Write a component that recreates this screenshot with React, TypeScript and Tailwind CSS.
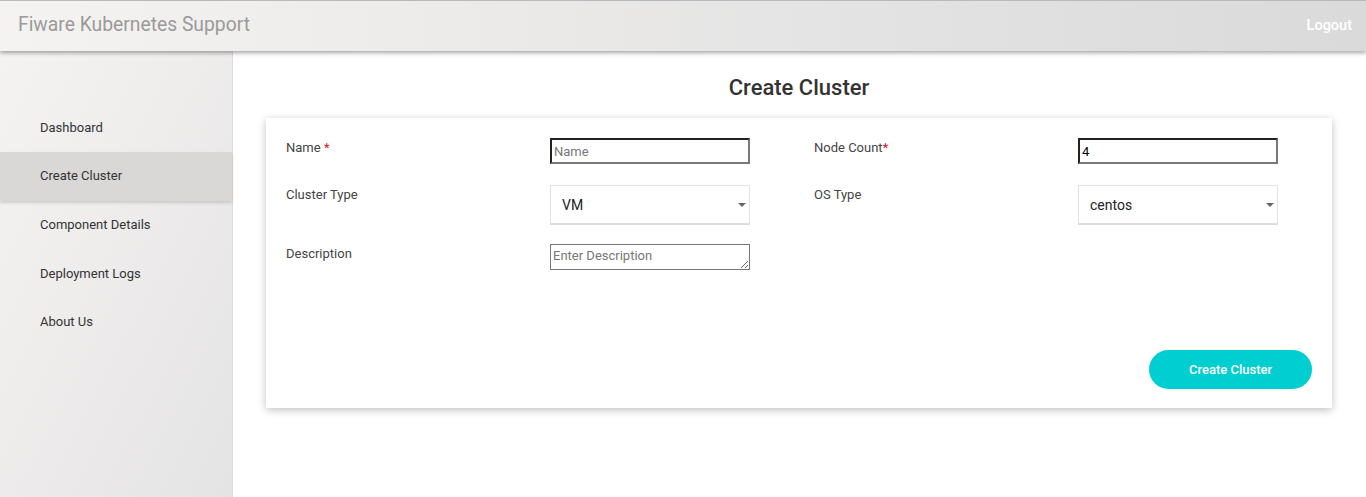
import React, { useState } from 'react';

const navItems = ['Dashboard', 'Create Cluster', 'Component Details', 'Deployment Logs', 'About Us'];

const SelectBox = ({ value, options }: { value: string; options: string[] }) => (
  <div className="relative w-[200px]">
    <select
      defaultValue={value}
      className="w-full h-[40px] appearance-none bg-white border border-[#e2e2e2] border-b-2 border-b-[#dcdcdc] pl-[11px] pt-[2px] text-[14px] text-[#222] outline-none"
    >
      {options.map((o) => (
        <option key={o}>{o}</option>
      ))}
    </select>
    <span className="pointer-events-none absolute right-[4px] top-[18px] w-0 h-0 border-l-[4px] border-r-[4px] border-t-[4px] border-l-transparent border-r-transparent border-t-[#666]" />
  </div>
);

export default function App() {
  const [active] = useState('Create Cluster');
  const [nodeCount, setNodeCount] = useState('4');

  return (
    <div className="w-full h-[497px] flex flex-col bg-white overflow-hidden font-['Roboto',sans-serif]">
      <header className="relative z-10 h-[51px] shrink-0 border-t border-[#b9b9b9] bg-gradient-to-r from-[#f5f3f2] to-[#dadada] shadow-[0_2px_4px_rgba(0,0,0,0.35)] flex items-center justify-between pl-[18px] pr-[14px]">
        <span className="text-[19.3px] text-[#9a9a9a] pb-[1px]">Fiware Kubernetes Support</span>
        <span className="text-[14.5px] font-medium text-white pb-[1px]">Logout</span>
      </header>
      <div className="flex flex-1">
        <aside className="w-[233px] shrink-0 border-r border-[#dcdcdc] bg-gradient-to-br from-[#f5f3f2] to-[#e5e4e4] pt-[52px]">
          {navItems.map((item) => (
            <div
              key={item}
              className={
                item === active
                  ? 'h-[49px] flex items-center pl-[40px] text-[13px] text-[#333] bg-[#dad8d7] shadow-[0_2px_3px_rgba(0,0,0,0.15)]'
                  : 'h-[48.5px] flex items-center pl-[40px] text-[13px] text-[#333]'
              }
            >
              {item}
            </div>
          ))}
        </aside>
        <main className="flex-1 pl-[33px] pr-[34px]">
          <h1 className="text-center text-[22px] font-medium text-[#333] mt-[23px] mb-[16px] leading-[28px]">Create Cluster</h1>
          <div className="bg-white shadow-[0_2px_8px_rgba(0,0,0,0.25)] h-[290px] pl-[20px] pr-[20px] pt-[20px] flex flex-col">
            <div className="grid grid-cols-[264px_264px_264px_200px] gap-y-[21px] text-[13px] text-[#444]">
              <div>
                Name <span className="text-[#e0112b]">*</span>
              </div>
              <input
                placeholder="Name"
                className="w-[200px] h-[26px] border-2 border-t-[#222] border-l-[#222] border-r-[#777] border-b-[#777] px-[2px] text-[13px] outline-none placeholder:text-[#777]"
              />
              <div>
                Node Count<span className="text-[#e0112b]">*</span>
              </div>
              <input
                value={nodeCount}
                onChange={(e) => setNodeCount(e.target.value)}
                className="w-[200px] h-[26px] border-2 border-t-[#222] border-l-[#222] border-r-[#777] border-b-[#777] px-[2px] text-[13px] text-black outline-none"
              />

              <div>Cluster Type</div>
              <SelectBox value="VM" options={['VM', 'Baremetal']} />
              <div>OS Type</div>
              <SelectBox value="centos" options={['centos', 'ubuntu']} />

              <div className="-mt-[2px]">Description</div>
              <textarea
                placeholder="Enter Description"
                className="w-[200px] h-[26px] border border-[#767676] px-[2px] text-[13px] leading-[22px] outline-none placeholder:text-[#777] -mt-[2px] resize-y"
              />
            </div>
            <div className="flex justify-end mt-auto mb-[19px]">
              <button className="w-[163px] h-[39px] rounded-full bg-[#00ced1] text-white text-[13px] font-medium">
                Create Cluster
              </button>
            </div>
          </div>
        </main>
      </div>
    </div>
  );
}
